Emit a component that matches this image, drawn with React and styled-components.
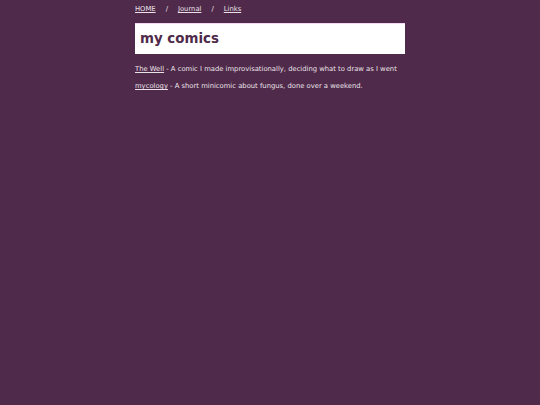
import React from "react";
import styled, { createGlobalStyle } from "styled-components";

const Global = createGlobalStyle`
  html, body { margin: 0; padding: 0; background: #4f2a4a; }
  body { font-family: "DejaVu Sans", Verdana, sans-serif; color: #ebe2e9; }
`;

const Page = styled.div`
  width: 270px;
  margin: 0 auto;
  padding-top: 4px;
`;

const Nav = styled.nav`
  display: flex;
  gap: 10px;
  font-size: 6.8px;
  line-height: 10px;
`;

const NavLink = styled.a`
  color: #ebe2e9;
  text-decoration: underline;
`;

const Header = styled.div`
  margin-top: 8.5px;
  background: #fff;
  border-top: 1px solid #f0d8ee;
  height: 30px;
  display: flex;
  align-items: center;
  padding-left: 5px;
`;

const Title = styled.h1`
  margin: 0;
  font-size: 13.4px;
  font-weight: bold;
  color: #4f2a4a;
`;

const List = styled.div`
  margin-top: 10px;
  display: flex;
  flex-direction: column;
  gap: 7.5px;
  font-size: 6.8px;
  line-height: 10px;
`;

const Item = styled.p`
  margin: 0;
`;

export default function App() {
  return (
    <>
      <Global />
      <Page>
        <Nav>
          <NavLink href="#">HOME</NavLink>
          <span>/</span>
          <NavLink href="#">Journal</NavLink>
          <span>/</span>
          <NavLink href="#">Links</NavLink>
        </Nav>
        <Header>
          <Title>my comics</Title>
        </Header>
        <List>
          <Item>
            <NavLink href="#">The Well</NavLink> - A comic I made improvisationally, deciding what to draw as I went
          </Item>
          <Item>
            <NavLink href="#">mycology</NavLink> - A short minicomic about fungus, done over a weekend.
          </Item>
        </List>
      </Page>
    </>
  );
}
